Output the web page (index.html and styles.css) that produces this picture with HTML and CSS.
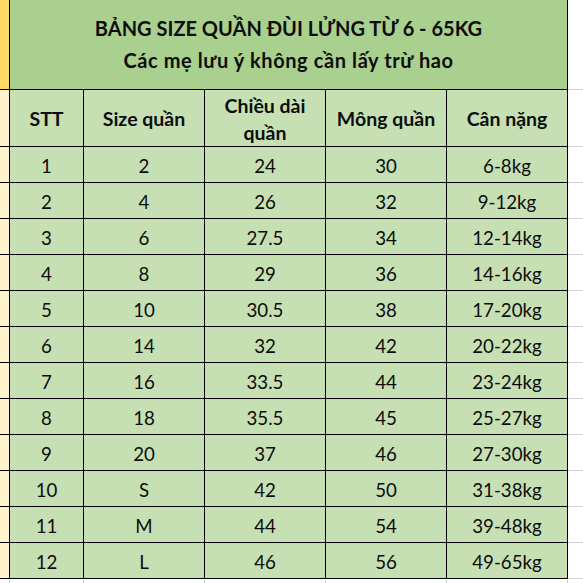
FILE: index.html
```html
<!DOCTYPE html>
<html lang="vi">
<head>
<meta charset="utf-8">
<title>Bảng size quần đùi lửng</title>
<link rel="stylesheet" href="styles.css">
</head>
<body>
<div class="sheet">
  <div class="strip strip-top"></div>
  <div class="title">
    <div class="title-main">BẢNG SIZE QUẦN ĐÙI LỬNG TỪ 6 - 65KG</div>
    <div class="title-sub">Các mẹ lưu ý không cần lấy trừ hao</div>
  </div>
  <div class="pad"></div>

  <div class="strip"></div>
  <div class="cell head">STT</div>
  <div class="cell head">Size quần</div>
  <div class="cell head wrap">Chiều dài<br>quần</div>
  <div class="cell head">Mông quần</div>
  <div class="cell head">Cân nặng</div>
  <div class="pad"></div>

  <div class="strip"></div><div class="cell">1</div><div class="cell">2</div><div class="cell">24</div><div class="cell">30</div><div class="cell">6-8kg</div><div class="pad"></div>
  <div class="strip"></div><div class="cell">2</div><div class="cell">4</div><div class="cell">26</div><div class="cell">32</div><div class="cell">9-12kg</div><div class="pad"></div>
  <div class="strip"></div><div class="cell">3</div><div class="cell">6</div><div class="cell">27.5</div><div class="cell">34</div><div class="cell">12-14kg</div><div class="pad"></div>
  <div class="strip"></div><div class="cell">4</div><div class="cell">8</div><div class="cell">29</div><div class="cell">36</div><div class="cell">14-16kg</div><div class="pad"></div>
  <div class="strip"></div><div class="cell">5</div><div class="cell">10</div><div class="cell">30.5</div><div class="cell">38</div><div class="cell">17-20kg</div><div class="pad"></div>
  <div class="strip"></div><div class="cell">6</div><div class="cell">14</div><div class="cell">32</div><div class="cell">42</div><div class="cell">20-22kg</div><div class="pad"></div>
  <div class="strip"></div><div class="cell">7</div><div class="cell">16</div><div class="cell">33.5</div><div class="cell">44</div><div class="cell">23-24kg</div><div class="pad"></div>
  <div class="strip"></div><div class="cell">8</div><div class="cell">18</div><div class="cell">35.5</div><div class="cell">45</div><div class="cell">25-27kg</div><div class="pad"></div>
  <div class="strip"></div><div class="cell">9</div><div class="cell">20</div><div class="cell">37</div><div class="cell">46</div><div class="cell">27-30kg</div><div class="pad"></div>
  <div class="strip"></div><div class="cell">10</div><div class="cell">S</div><div class="cell">42</div><div class="cell">50</div><div class="cell">31-38kg</div><div class="pad"></div>
  <div class="strip"></div><div class="cell">11</div><div class="cell">M</div><div class="cell">44</div><div class="cell">54</div><div class="cell">39-48kg</div><div class="pad"></div>
  <div class="strip"></div><div class="cell">12</div><div class="cell">L</div><div class="cell">46</div><div class="cell">56</div><div class="cell">49-65kg</div><div class="pad"></div>

  <div class="foot"></div><div class="foot"></div><div class="foot"></div><div class="foot"></div><div class="foot"></div><div class="foot"></div><div class="foot last"></div>
</div>
</body>
</html>
```
FILE: styles.css
```css
* { box-sizing: border-box; }
html, body { margin: 0; padding: 0; background: #fff; }
body {
  font-family: Lato, "Open Sans", "Noto Sans", sans-serif;
  font-size: 18.7px;
  color: #0d0d0d;
  overflow: hidden;
}
.sheet {
  display: grid;
  grid-template-columns: 10px 74px 121px 121px 121px 121px 30px;
  grid-template-rows: 90px 57px repeat(12, 36px) 20px;
  width: 583px;
  height: 583px;
  overflow: hidden;
}
.strip {
  background: #fff2cc;
  border-right: 1px solid #000;
  border-bottom: 1px solid #000;
}
.strip-top { background: #ffd966; }
.title {
  grid-column: 2 / span 5;
  background: #a9d08e;
  border-right: 1px solid #000;
  border-bottom: 1px solid #000;
  display: flex;
  flex-direction: column;
  justify-content: center;
  align-items: center;
  font-weight: 700;
  font-size: 20px;
  line-height: 32px;
  padding-bottom: 1px;
}
.title-sub { letter-spacing: 0.6px; }
.pad {
  border-bottom: 1px solid #d4d4d4;
}
.cell {
  background: #c6e0b4;
  border-right: 1px solid #000;
  border-bottom: 1px solid #000;
  display: flex;
  align-items: center;
  justify-content: center;
  text-align: center;
  padding-top: 3px;
}
.head {
  font-weight: 700;
  font-size: 19.5px;
  padding-top: 1px;
}
.wrap { line-height: 27px; }
.foot {
  border-right: 1px solid #d4d4d4;
}
.foot.last { border-right: 0; }
```
